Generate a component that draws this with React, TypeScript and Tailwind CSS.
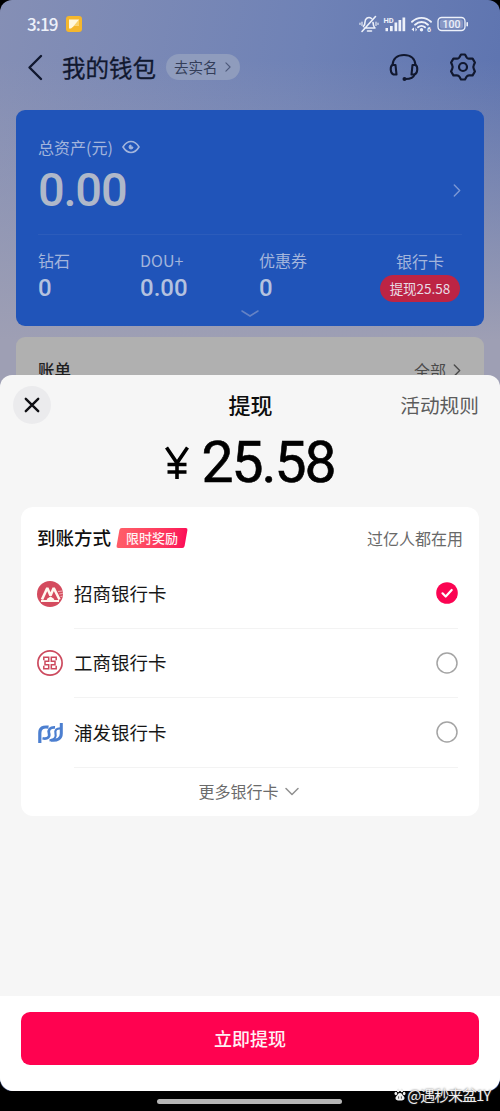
import type { ReactNode } from 'react';

function Chevron({ className, d = 'M2 1l5 5-5 5', w = 1.3 }: { className: string; d?: string; w?: number }) {
  return (
    <svg viewBox="0 0 9 12" className={className} fill="none" stroke="currentColor" strokeWidth={w} strokeLinecap="round" strokeLinejoin="round">
      <path d={d} />
    </svg>
  );
}

function StatusBar() {
  return (
    <div className="flex h-[46px] items-center pt-0.5 pl-[27px] text-[#edf1fa]">
      <span className="w-[39px] pb-[2px] font-['Noto_Sans_CJK_SC',sans-serif] text-[17px] leading-none font-medium tracking-[-0.900px]">3:19</span>
      <svg viewBox="0 0 16 16" className="size-4">
        <rect width="16" height="16" rx="3" fill="#f5b72c" />
        <path d="M3 3.5h10v6H8.5L5 12.5H3z" fill="#fff7dc" />
        <path d="M13 3.5v6H8.5L6 12z" fill="#f9d269" />
      </svg>
      <svg viewBox="0 0 114 20" className="ml-[276px] h-5 w-[114px]" fill="none" stroke="currentColor" strokeWidth="1.6" strokeLinecap="round" strokeLinejoin="round">
        <path d="M6.500 14h10.500c-1.700-1.500-1.800-3-2-5.500M13.500 4.500C10.500 2 7 4.500 7 8c0 2-.3 3.300-1.600 4.500M17.500 2.500L4 17.500M9.500 17h4" />
        <path d="M4 8v3.500M2 9v1.500M18 8v3.500M20 9v1.500" strokeWidth="1.100" />
        <g fill="currentColor" stroke="none">
          <rect x="27.500" y="14" width="2.500" height="3.200" />
          <rect x="32" y="12" width="2.700" height="5.200" />
          <rect x="36.500" y="8.500" width="2.700" height="8.700" />
          <rect x="40.500" y="6" width="2.700" height="11.200" />
          <rect x="44.500" y="3.500" width="2.700" height="13.700" />
          <text x="25.500" y="8.500" fontSize="7.500" fontWeight="700" fontFamily="Roboto, sans-serif">HD</text>
          <circle cx="63.500" cy="15.800" r="1.700" />
          <text x="69" y="18" fontSize="7" fontWeight="700" fontFamily="Roboto, sans-serif">6</text>
          <path d="M56 13.500v4l-2.500-2.300zM57.500 13.500v4l1.500-1.700z" />
        </g>
        <path d="M54 7.800c5.500-5.300 13.500-5.300 19 0M57 10.700c4-3.600 9.200-3.600 13 0M60 13.300c2.200-1.800 4.800-1.800 7 0" strokeWidth="1.900" />
        <rect x="80" y="3.500" width="27" height="13" rx="3.700" strokeWidth="1.300" />
        <rect x="82" y="5.500" width="23" height="9" rx="2" fill="#bdc7e2" fillOpacity=".4" stroke="none" />
        <path d="M109.200 8.700v3" />
        <text x="93.500" y="13.800" textAnchor="middle" fontSize="10.500" fontWeight="500" fontFamily="Roboto, sans-serif" fill="currentColor" stroke="none">100</text>
      </svg>
    </div>
  );
}

function Header() {
  return (
    <div className="flex h-16 items-start pt-[6px] text-[#11182f]">
      <svg viewBox="0 0 16 28" className="mt-[1px] ml-[27px] h-7 w-4" fill="none" stroke="currentColor" strokeWidth="2.400" strokeLinecap="round" strokeLinejoin="round">
        <path d="M14 3L2.500 14.500 14 26" />
      </svg>
      <h1 className="ml-[19px] w-[104px] text-[23.500px] leading-[30px] font-normal whitespace-nowrap [-webkit-text-stroke:0.300px]">我的钱包</h1>
      <div className="mt-[2px] flex h-[26px] w-[74px] items-center rounded-full bg-[#8f9cbd] pl-[8px] text-[14.500px] leading-none text-[#333e59]">
        去实名
        <Chevron className="ml-1.5 h-[10px] w-[8px] text-[#4e5a7b]" />
      </div>
      <svg viewBox="0 0 30 30" className="mt-[1px] ml-[149px] size-[30px]" fill="none" stroke="currentColor" strokeWidth="2.100" strokeLinecap="round" strokeLinejoin="round">
        <path d="M3.500 12C4 5.500 8.500 2 15 2s11 3.500 11.500 10" />
        <path d="M3.500 12H6.500l1 9.500H4.500C1 20.500 1 13 3.500 12zM26.500 12H23.500l-1 9.500h3C29 20.500 29 13 26.500 12z" />
        <path d="M25.500 21.500c-1 3.500-4 4.500-9 4.500" />
        <circle cx="15.500" cy="26" r="2" fill="currentColor" stroke="none" />
      </svg>
      <svg viewBox="0 0 28 28" className="mt-[1px] ml-[30px] size-7" fill="none" stroke="currentColor" strokeWidth="2.200" strokeLinejoin="round">
        <path d="M12 1.500h4l1.700 3c.5.800 1.400 1.300 2.400 1.200l3.500-.1 2.300 3.900-1.200 2.900c-.4.900-.4 2.300 0 3.200l1.200 2.900-2.300 3.900-3.500-.1c-1 0-1.900.4-2.400 1.200l-1.700 3h-4l-1.700-3c-.5-.8-1.400-1.200-2.400-1.200l-3.500.1-2.300-3.900 1.200-2.900c.4-.9.400-2.300 0-3.200L2.100 9.500l2.300-3.900 3.500.1c1 .1 1.900-.4 2.400-1.200z" />
        <circle cx="14" cy="14" r="4" />
      </svg>
    </div>
  );
}

function Stat({ label, value, className }: { label: string; value: string; className: string }) {
  return (
    <div className={className}>
      <div className="text-[16px] leading-[22px] text-[#a3b5dc]">{label}</div>
      <div className="mt-[3px] font-['Roboto',sans-serif] text-[24px] leading-[28px] font-medium text-[#b4c2df]">{value}</div>
    </div>
  );
}

function AssetCard() {
  return (
    <section className="mx-4 h-[216px] rounded-[9px] bg-[#2054b9] pt-[26px] pl-[22px]">
      <div className="flex h-[22px] items-center text-[16px] leading-none whitespace-nowrap text-[#a3b5dc]">
        <span className="w-[84px]">总资产(元)</span>
        <svg viewBox="0 0 18 14" className="h-[14px] w-[18px]" fill="none" stroke="currentColor" strokeWidth="1.600">
          <path d="M1 7c4.500-7.300 11.500-7.300 16 0-4.500 7.300-11.500 7.300-16 0z" />
          <path d="M9 5a2 2 0 1 0 2 2H9z" fill="currentColor" strokeWidth="1" />
        </svg>
      </div>
      <div className="flex h-[76px] items-start justify-between pr-[22px]">
        <span className="mt-[8px] font-['Roboto',sans-serif] text-[47px] leading-none font-medium tracking-[-1.200px] text-[#b0b8c9]">0.00</span>
        <Chevron className="mt-[26px] h-[13px] w-[10px] text-[#7b97d4]" />
      </div>
      <div className="mr-[22px] flex border-t border-[#2c5cbb] pt-[14px]">
        <Stat label="钻石" value="0" className="w-[102px]" />
        <Stat label="DOU+" value="0.00" className="w-[119px]" />
        <Stat label="优惠券" value="0" className="w-[121px]" />
        <div className="w-20 text-center">
          <div className="text-[16px] leading-[24px] text-[#a3b5dc]">银行卡</div>
          <div className="mt-[2px] h-[27px] rounded-full bg-[#bd2444] text-[13.500px] leading-[26px] whitespace-nowrap text-[#e8dce4]">提现25.58</div>
        </div>
      </div>
      <svg viewBox="0 0 18 8" className="mt-[8px] ml-[203px] h-2 w-[18px]" fill="none" stroke="#6482c5" strokeWidth="1.500" strokeLinecap="round">
        <path d="M1 1l8 5 8-5" />
      </svg>
    </section>
  );
}

function Radio({ checked }: { checked?: boolean }) {
  return checked ? (
    <svg viewBox="0 0 22 22" className="size-[22px]">
      <circle cx="11" cy="11" r="10.800" fill="#fb0452" />
      <path d="M6.500 11.300l3.200 3.200 6-6.500" fill="none" stroke="#fff" strokeWidth="2.200" strokeLinecap="round" strokeLinejoin="round" />
    </svg>
  ) : (
    <svg viewBox="0 0 22 22" className="size-[22px]">
      <circle cx="11" cy="11" r="10" fill="none" stroke="#a4a4a4" strokeWidth="1.500" />
    </svg>
  );
}

function BankRow({ icon, name, checked }: { icon: ReactNode; name: string; checked?: boolean }) {
  return (
    <div className="flex h-[69.500px] pl-4">
      <div className="flex w-[37px] items-center">{icon}</div>
      <div className="mr-[21px] flex flex-1 items-center justify-between border-b border-[#f3f3f3] text-[18.500px] text-[#161616]">
        <span className="pt-[1px]">{name}</span>
        <Radio checked={checked} />
      </div>
    </div>
  );
}

const merchants = (
  <svg viewBox="0 0 26 26" className="size-[26px]">
    <circle cx="13" cy="13" r="13" fill="#d44b5e" />
    <path d="M5 18.500L10.300 7l3.200 7.500L16.700 7l5.800 11.500" fill="none" stroke="#fff8ef" strokeWidth="2.600" strokeLinejoin="bevel" />
    <path d="M10.500 17.500l3-2 3 2 1.500 2.500H9z" fill="#fff8ef" />
    <path d="M4 20h18" stroke="#fff8ef" strokeWidth="2" />
    <path d="M21 10.500l4.500-.5M22.300 13l3.500-.5M23.500 15.500l2-.3" stroke="#f6c9c9" strokeWidth=".8" />
  </svg>
);

const icbc = (
  <svg viewBox="0 0 26 26" className="size-[26px]" fill="none" stroke="#cc4a5e">
    <circle cx="13" cy="13" r="12.100" strokeWidth="1.700" />
    <path d="M6.800 10.300V7.300H11.700V11.300H8V14.700H11.700V18.700H6.800V15.800M19.200 10.300V7.300H14.300V11.300H18V14.700H14.300V18.700H19.200V15.800" strokeWidth="1.500" />
  </svg>
);

const spdb = (
  <svg viewBox="0 0 26 22" className="h-[22px] w-[26px]" fill="none" stroke="#4c7fd0">
    <path d="M2.800 21V11C2.800 6.200 6 4.300 11.500 5.200" strokeWidth="3.200" />
    <path d="M5.500 16.300C11 17.500 13 14.500 12 11.500 11 8 13 5 18 5.300" strokeWidth="2.700" />
    <path d="M12.500 18.300C17.500 18 19.500 15.500 18.500 11.500 17.700 8 19.500 6.200 23.500 6.300" strokeWidth="2.200" />
    <path d="M24.300 1V11.500C24.300 16.500 20.500 19 14 18.200" strokeWidth="3" />
  </svg>
);

function WithdrawSheet() {
  return (
    <div className="absolute inset-x-0 top-[375px] flex h-[716px] flex-col overflow-hidden rounded-t-[12px] rounded-b-[14px] bg-[#f6f6f6]">
      <div className="flex h-[60px] items-center justify-between pr-[21px] pl-[13px]">
        <button className="flex size-[38px] items-center justify-center rounded-full bg-[#ebebed]">
          <svg viewBox="0 0 16 16" className="size-4" fill="none" stroke="#101014" strokeWidth="2.400" strokeLinecap="round">
            <path d="M1.800 1.800l12.400 12.400M14.200 1.800l-12.400 12.400" />
          </svg>
        </button>
        <h2 className="ml-[50px] pb-[2px] text-[22px] leading-none font-medium text-[#0d0d0d]">提现</h2>
        <span className="text-[19.700px] leading-none text-[#5c5c5c]">活动规则</span>
      </div>
      <div className="flex h-[72px] justify-center text-black">
        <svg viewBox="0 0 24 34" className="mt-[11px] mr-[12px] h-[34px] w-6" fill="none" stroke="currentColor" strokeWidth="3.600">
          <path d="M1.500 1.500L12 17 22.500 1.500M12 16v17M2.500 18.500h19M2.500 26h19" />
        </svg>
        <span className="font-['Roboto',sans-serif] text-[57px] leading-[55px] font-normal tracking-[-2px] [-webkit-text-stroke:0.600px]">25.58</span>
      </div>
      <section className="mx-[21px] h-[309px] rounded-[12px] bg-white">
        <div className="flex h-[52px] items-center pt-[10px] pr-4 pl-4">
          <h3 className="pb-[1px] text-[18.500px] leading-none font-medium text-[#101010]">到账方式</h3>
          <span className="relative ml-[5px] flex h-5 w-[72px] items-center justify-center text-[13px] leading-none font-medium text-[#fff2f3]">
            <span className="absolute inset-y-0 right-0.5 left-0.5 -skew-x-[10deg] rounded-[2px] bg-linear-to-r from-[#ff5d68] to-[#fc0b58]" />
            <span className="relative pb-[1px]">限时奖励</span>
          </span>
          <span className="ml-auto pb-[1px] text-[16px] leading-none text-[#696969]">过亿人都在用</span>
        </div>
        <BankRow icon={merchants} name="招商银行卡" checked />
        <BankRow icon={icbc} name="工商银行卡" />
        <BankRow icon={spdb} name="浦发银行卡" />
        <div className="flex h-[48px] items-center justify-center pr-[3px] text-[16px] leading-none text-[#6b6b6b]">
          <span className="pb-[1px]">更多银行卡</span>
          <svg viewBox="0 0 14 9" className="ml-[6px] h-[9px] w-[14px]" fill="none" stroke="#909090" strokeWidth="1.500" strokeLinecap="round" strokeLinejoin="round">
            <path d="M1 1.500l6 6 6-6" />
          </svg>
        </div>
      </section>
      <div className="mt-auto h-[95px] bg-white px-[21px] pt-4">
        <button className="h-[53px] w-full rounded-[9px] bg-[#ff0250] text-[18px] font-medium text-[#fff0f4]">立即提现</button>
      </div>
    </div>
  );
}

export default function App() {
  return (
    <div className="relative h-[1111px] w-[500px] overflow-hidden bg-black font-['Noto_Sans_CJK_SC',sans-serif]">
      <div className="h-[1091px] overflow-hidden rounded-[12px] bg-[linear-gradient(100deg,#858fb5_0%,#6f82b6_45%,#5069ab_100%)]">
        <div className="h-[400px] bg-[linear-gradient(180deg,rgba(158,158,180,0)_15%,#9e9fb4_85%)]">
          <StatusBar />
          <Header />
          <AssetCard />
          <section className="mx-4 mt-[11px] flex h-[63px] items-start justify-between rounded-t-[9px] bg-[#b0b0b0] pt-[24px] pr-[22px] pl-[22px] leading-none">
            <h3 className="text-[16.500px] leading-[18px] font-medium text-[#202020]">账单</h3>
            <span className="flex items-center text-[16px] leading-[18px] text-[#4a4a4a]">
              全部
              <Chevron className="ml-[6px] h-[13px] w-[10px]" />
            </span>
          </section>
        </div>
      </div>
      <WithdrawSheet />
      <div className="absolute bottom-[7px] left-[157px] h-[5px] w-[185px] rounded-full bg-[#b5b5b5]" />
      <div className="absolute right-[10px] bottom-[8px] flex h-[18px] items-center text-[15px] leading-none whitespace-nowrap text-[#f0f0f0] [text-shadow:0_0_2px_#555]">
        <svg viewBox="0 0 12 14" className="mr-[1px] h-[13px] w-[12px]" fill="currentColor">
          <ellipse cx="4" cy="2.500" rx="1.500" ry="2" />
          <ellipse cx="8" cy="2.500" rx="1.500" ry="2" />
          <ellipse cx="1.500" cy="6" rx="1.400" ry="1.900" />
          <ellipse cx="10.500" cy="6" rx="1.400" ry="1.900" />
          <path d="M6 5.500c2 0 2.500 2 4 3.500 2 2.500.500 5-4 4.500C1.500 14 0 11.500 2 9c1.500-1.500 2-3.500 4-3.500z" />
          <path d="M4.500 9v2.500M7.500 9v2.500" stroke="#222" strokeWidth=".8" />
        </svg>
        <span className="tracking-[-1.100px]">@遇秒来盆1Y</span>
      </div>
    </div>
  );
}
